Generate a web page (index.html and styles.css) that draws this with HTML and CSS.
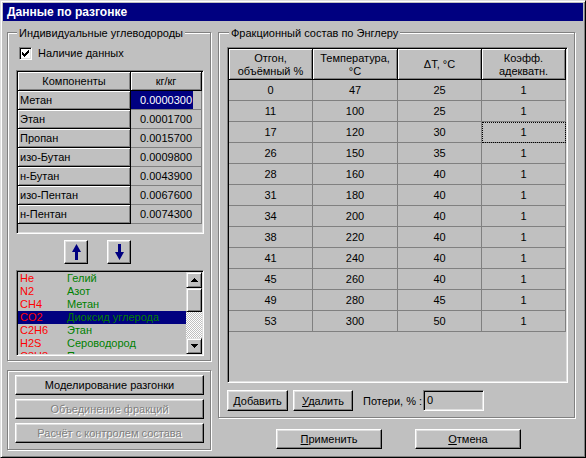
FILE: index.html
```html
<!DOCTYPE html>
<html lang="ru">
<head>
<meta charset="utf-8">
<title>Данные по разгонке</title>
<link rel="stylesheet" href="styles.css">
</head>
<body>
<div class="window">
  <div class="titlebar">Данные по разгонке</div>
  <div class="client">
    <div class="left-col">
      <div class="group group-comp">
        <span class="group-title">Индивидуальные углеводороды</span>
        <div class="check-row">
          <span class="checkbox"><svg width="7" height="7" viewBox="0 0 7 7" shape-rendering="crispEdges"><rect x="0" y="2" width="1" height="3"/><rect x="1" y="3" width="1" height="3"/><rect x="2" y="4" width="1" height="3"/><rect x="3" y="3" width="1" height="3"/><rect x="4" y="2" width="1" height="3"/><rect x="5" y="1" width="1" height="3"/><rect x="6" y="0" width="1" height="3"/></svg></span>
          <span>Наличие данных</span>
        </div>
        <div class="sunken lgrid">
          <div class="lgrid-body">
            <div class="fx head">Компоненты</div><div class="fx head">кг/кг</div>
            <div class="fx name">Метан</div><div class="cell val sel">0.0000300</div>
            <div class="fx name">Этан</div><div class="cell val">0.0001700</div>
            <div class="fx name">Пропан</div><div class="cell val">0.0015700</div>
            <div class="fx name">изо-Бутан</div><div class="cell val">0.0009800</div>
            <div class="fx name">н-Бутан</div><div class="cell val">0.0043900</div>
            <div class="fx name">изо-Пентан</div><div class="cell val">0.0067600</div>
            <div class="fx name">н-Пентан</div><div class="cell val">0.0074300</div>
          </div>
        </div>
        <div class="arrows">
          <button class="btn arrow-btn"><svg width="9" height="16" viewBox="0 0 9 16"><path d="M4.5 0 L9 8 H6 V16 H3 V8 H0 Z"/></svg></button>
          <button class="btn arrow-btn"><svg width="9" height="16" viewBox="0 0 9 16"><path d="M3 0 H6 V8 H9 L4.5 16 L0 8 H3 Z"/></svg></button>
        </div>
        <div class="sunken listbox">
          <div class="list-items">
            <div class="item"><span class="formula">He</span><span class="gname">Гелий</span></div>
            <div class="item"><span class="formula">N2</span><span class="gname">Азот</span></div>
            <div class="item"><span class="formula">CH4</span><span class="gname">Метан</span></div>
            <div class="item selected"><span class="formula">CO2</span><span class="gname">Диоксид углерода</span></div>
            <div class="item"><span class="formula">C2H6</span><span class="gname">Этан</span></div>
            <div class="item"><span class="formula">H2S</span><span class="gname">Сероводород</span></div>
            <div class="item"><span class="formula">C3H8</span><span class="gname">Пропан</span></div>
          </div>
          <div class="vscroll">
            <div class="sb-btn"><svg width="7" height="4" viewBox="0 0 7 4" shape-rendering="crispEdges"><rect x="3" y="0" width="1" height="1"/><rect x="2" y="1" width="3" height="1"/><rect x="1" y="2" width="5" height="1"/><rect x="0" y="3" width="7" height="1"/></svg></div>
            <div class="sb-btn thumb"></div>
            <div class="sb-track"></div>
            <div class="sb-btn"><svg width="7" height="4" viewBox="0 0 7 4" shape-rendering="crispEdges"><rect x="0" y="0" width="7" height="1"/><rect x="1" y="1" width="5" height="1"/><rect x="2" y="2" width="3" height="1"/><rect x="3" y="3" width="1" height="1"/></svg></div>
          </div>
        </div>
      </div>
      <div class="group group-actions">
        <button class="btn wide">Моделирование разгонки</button>
        <button class="btn wide" disabled>Объединение фракций</button>
        <button class="btn wide" disabled>Расчёт с контролем состава</button>
      </div>
    </div>
    <div class="right-col">
      <div class="group group-frac">
        <span class="group-title title-right">Фракционный состав по Энглеру</span>
        <div class="sunken rgrid">
          <div class="rgrid-body">
            <div class="fx rhead">Отгон,<br>объёмный %</div>
            <div class="fx rhead">Температура,<br>°C</div>
            <div class="fx rhead">ΔT, °C</div>
            <div class="fx rhead">Коэфф.<br>адекватн.</div>

            <div class="cell num">0</div><div class="cell num">47</div><div class="cell num">25</div><div class="cell num">1</div>
            <div class="cell num">11</div><div class="cell num">100</div><div class="cell num">25</div><div class="cell num">1</div>
            <div class="cell num">17</div><div class="cell num">120</div><div class="cell num">30</div><div class="cell num focus">1</div>
            <div class="cell num">26</div><div class="cell num">150</div><div class="cell num">35</div><div class="cell num">1</div>
            <div class="cell num">28</div><div class="cell num">160</div><div class="cell num">40</div><div class="cell num">1</div>
            <div class="cell num">31</div><div class="cell num">180</div><div class="cell num">40</div><div class="cell num">1</div>
            <div class="cell num">34</div><div class="cell num">200</div><div class="cell num">40</div><div class="cell num">1</div>
            <div class="cell num">38</div><div class="cell num">220</div><div class="cell num">40</div><div class="cell num">1</div>
            <div class="cell num">41</div><div class="cell num">240</div><div class="cell num">40</div><div class="cell num">1</div>
            <div class="cell num">45</div><div class="cell num">260</div><div class="cell num">40</div><div class="cell num">1</div>
            <div class="cell num">49</div><div class="cell num">280</div><div class="cell num">45</div><div class="cell num">1</div>
            <div class="cell num">53</div><div class="cell num">300</div><div class="cell num">50</div><div class="cell num">1</div>
          </div>
        </div>
        <div class="grid-actions">
          <button class="btn btn-add"><u>Д</u>обавить</button>
          <button class="btn btn-del"><u>У</u>далить</button>
          <span class="loss-label">Потери, % :</span>
          <div class="sunken field">0</div>
        </div>
      </div>
      <div class="dialog-buttons">
        <button class="btn dlg"><u>П</u>рименить</button>
        <button class="btn dlg"><u>О</u>тмена</button>
      </div>
    </div>
  </div>
</div>
</body>
</html>
```

FILE: styles.css
```css
* { box-sizing: border-box; }

html, body {
  margin: 0;
  padding: 0;
  background: #c0c0c0;
}

body {
  font-family: "Liberation Sans", Arial, sans-serif;
  font-size: 11px;
  color: #000;
}

.window {
  width: 586px;
  height: 458px;
  background: #c0c0c0;
  border: 1px solid;
  border-color: #dfdfdf #000 #000 #dfdfdf;
  box-shadow: inset 1px 1px #fff, inset -1px -1px #808080;
  padding: 2px;
}

.titlebar {
  height: 18px;
  line-height: 18px;
  background: #000080;
  color: #fff;
  font-weight: bold;
  font-size: 12px;
  padding-left: 4px;
  white-space: nowrap;
}

.client {
  display: flex;
  padding: 11px 0 0 4px;
}

.left-col {
  width: 204px;
  display: flex;
  flex-direction: column;
}

.right-col {
  width: 357px;
  margin-left: 7px;
  display: flex;
  flex-direction: column;
}

/* group boxes (etched) */
.group {
  position: relative;
  border: 1px solid #808080;
  box-shadow: inset 1px 1px #fff, 1px 1px #fff;
}

.group-title {
  position: absolute;
  top: -6px;
  left: 9px;
  padding: 0 2px;
  line-height: 13px;
  background: #c0c0c0;
  white-space: nowrap;
}

.title-right { left: 10px; }

.group-comp {
  width: 204px;
  height: 329px;
  padding: 14px 0 0 8px;
}

.group-actions {
  width: 204px;
  height: 80px;
  margin-top: 9px;
  padding: 4px 0 0 7px;
  display: flex;
  flex-direction: column;
  gap: 4px;
}

.group-frac {
  width: 357px;
  height: 386px;
  padding: 14px 0 0 8px;
}

/* checkbox */
.check-row {
  display: flex;
  align-items: center;
  height: 13px;
  line-height: 13px;
  margin-left: 3px;
  gap: 6px;
}

.checkbox {
  width: 13px;
  height: 13px;
  background: #fff;
  border: 1px solid;
  border-color: #808080 #fff #fff #808080;
  box-shadow: inset 1px 1px #000, inset -1px -1px #dfdfdf;
  padding: 2px;
  display: flex;
}

.checkbox svg { fill: #000; display: block; }

/* sunken frames */
.sunken {
  border: 1px solid;
  border-color: #808080 #fff #fff #808080;
  box-shadow: inset 1px 1px #000, inset -1px -1px #dfdfdf;
  padding: 1px;
  background: #c0c0c0;
}

/* grid cells */
.fx {
  background: #c0c0c0;
  border-right: 1px solid #000;
  border-bottom: 1px solid #000;
  box-shadow: inset 1px 1px #fff, inset -1px -1px #808080;
}

.cell {
  border-right: 1px solid #808080;
  border-bottom: 1px solid #808080;
}

/* left grid */
.lgrid {
  width: 188px;
  height: 164px;
  margin-top: 10px;
}

.lgrid-body {
  display: grid;
  grid-template-columns: 113px 71px;
  grid-auto-rows: 19px;
  line-height: 18px;
}

.head {
  text-align: center;
}

.name {
  padding-left: 2px;
  white-space: nowrap;
}

.val {
  text-align: right;
  padding-right: 9px;
}

.val.sel {
  background: linear-gradient(to right, #000080 0 62px, transparent 62px);
  color: #fff;
}

/* arrow buttons */
.arrows {
  display: flex;
  gap: 19px;
  margin-top: 6px;
  padding-left: 48px;
}

.btn {
  font: inherit;
  color: #000;
  background: #c0c0c0;
  border: 1px solid;
  border-color: #fff #000 #000 #fff;
  box-shadow: inset -1px -1px #808080, inset 1px 1px #dfdfdf;
  padding: 0;
  margin: 0;
  line-height: 16px;
  white-space: nowrap;
}

.btn:disabled {
  color: #808080;
  text-shadow: 1px 1px #fff;
}

.btn u { text-decoration: underline; text-underline-offset: 1px; }

.arrow-btn {
  width: 24px;
  height: 24px;
  display: flex;
  align-items: center;
  justify-content: center;
}

.arrow-btn svg { fill: #000080; display: block; }

/* listbox */
.listbox {
  width: 188px;
  height: 86px;
  margin-top: 6px;
  display: flex;
}

.list-items {
  width: 168px;
  height: 82px;
  overflow: hidden;
}

.item {
  display: grid;
  grid-template-columns: 47px 1fr;
  height: 13px;
  line-height: 13px;
  padding-left: 2px;
  white-space: nowrap;
}

.item.selected { background: #000080; }

.formula { color: #ff0000; }
.gname { color: #008000; }

.vscroll {
  width: 16px;
  height: 82px;
  display: flex;
  flex-direction: column;
}

.sb-btn {
  height: 16px;
  flex: none;
  background: #c0c0c0;
  border: 1px solid;
  border-color: #dfdfdf #000 #000 #dfdfdf;
  box-shadow: inset 1px 1px #fff, inset -1px -1px #808080;
  display: flex;
  align-items: center;
  justify-content: center;
}

.sb-btn svg { fill: #000; display: block; }

.sb-btn.thumb { height: 24px; }

.sb-track {
  flex: 1;
  background-color: #c0c0c0;
  background-image: repeating-conic-gradient(#fff 0 25%, #c0c0c0 0 50%);
  background-size: 2px 2px;
}

/* action buttons left */
.wide {
  width: 189px;
  height: 20px;
}

/* right grid */
.rgrid {
  width: 341px;
  height: 336px;
}

.rgrid-body {
  display: grid;
  grid-template-columns: 84px 85px 84px 84px;
  grid-template-rows: 31px;
  grid-auto-rows: 21px;
}

.rhead {
  display: flex;
  align-items: center;
  justify-content: center;
  text-align: center;
  line-height: 13px;
  padding-top: 1px;
}

.num {
  text-align: center;
  line-height: 20px;
}

.num.focus {
  outline: 1px dotted #000;
  outline-offset: -1px;
}

/* grid actions */
.grid-actions {
  display: flex;
  align-items: center;
  margin-top: 7px;
  height: 21px;
}

.btn-add { width: 61px; height: 21px; }
.btn-del { width: 60px; height: 21px; margin-left: 5px; }

.loss-label {
  margin-left: 10px;
  width: 60px;
  white-space: nowrap;
}

.field {
  width: 61px;
  height: 21px;
  line-height: 17px;
  padding: 1px 3px;
}

/* dialog buttons */
.dialog-buttons {
  display: flex;
  gap: 33px;
  margin-top: 11px;
  padding-left: 58px;
}

.dlg {
  width: 106px;
  height: 20px;
}
```
